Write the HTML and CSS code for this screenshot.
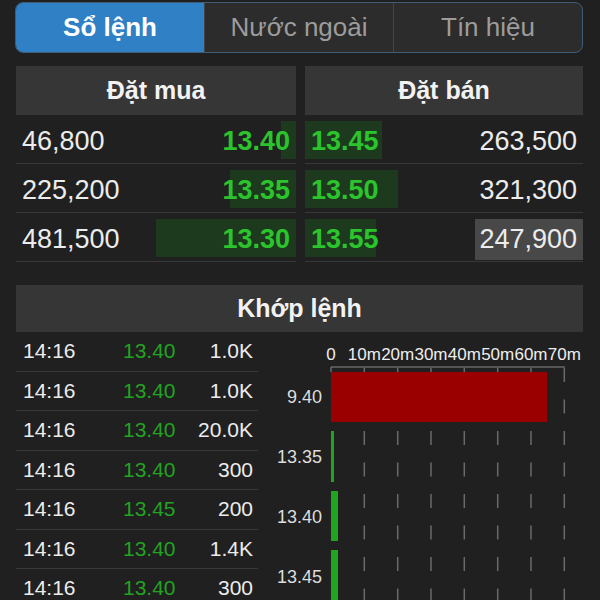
FILE: index.html
```html
<!DOCTYPE html>
<html lang="vi">
<head>
<meta charset="utf-8">
<title>Sổ lệnh</title>
<link rel="stylesheet" href="styles.css">
</head>
<body>
<div class="tabs">
  <div class="tab active">Sổ lệnh</div>
  <div class="tab">Nước ngoài</div>
  <div class="tab">Tín hiệu</div>
</div>

<div class="book">
  <div class="side buy">
    <div class="head">Đặt mua</div>
    <div class="row"><span class="bar" style="width:15px"></span><span class="qty">46,800</span><span class="price">13.40</span></div>
    <div class="row"><span class="bar" style="width:66px"></span><span class="qty">225,200</span><span class="price">13.35</span></div>
    <div class="row"><span class="bar" style="width:140px"></span><span class="qty">481,500</span><span class="price">13.30</span></div>
  </div>
  <div class="side sell">
    <div class="head">Đặt bán</div>
    <div class="row"><span class="bar" style="width:77px"></span><span class="price">13.45</span><span class="qty">263,500</span></div>
    <div class="row"><span class="bar" style="width:93px"></span><span class="price">13.50</span><span class="qty">321,300</span></div>
    <div class="row"><span class="bar" style="width:71px"></span><span class="price">13.55</span><span class="qty hl">247,900</span></div>
  </div>
</div>

<div class="match-head">Khớp lệnh</div>

<div class="match">
  <div class="trades">
    <div class="trade"><span class="t">14:16</span><span class="p">13.40</span><span class="v">1.0K</span></div>
    <div class="trade"><span class="t">14:16</span><span class="p">13.40</span><span class="v">1.0K</span></div>
    <div class="trade"><span class="t">14:16</span><span class="p">13.40</span><span class="v">20.0K</span></div>
    <div class="trade"><span class="t">14:16</span><span class="p">13.40</span><span class="v">300</span></div>
    <div class="trade"><span class="t">14:16</span><span class="p">13.45</span><span class="v">200</span></div>
    <div class="trade"><span class="t">14:16</span><span class="p">13.40</span><span class="v">1.4K</span></div>
    <div class="trade"><span class="t">14:16</span><span class="p">13.40</span><span class="v">300</span></div>
  </div>
  <svg class="chart" width="325" height="268" viewBox="0 0 325 268">
    <g class="ax" text-anchor="middle">
      <text x="73" y="28">0</text>
      <text x="106.3" y="28">10m</text>
      <text x="139.7" y="28">20m</text>
      <text x="173" y="28">30m</text>
      <text x="206.3" y="28">40m</text>
      <text x="239.7" y="28">50m</text>
      <text x="273" y="28">60m</text>
      <text x="306.3" y="28">70m</text>
    </g>
    <line x1="73" y1="35" x2="307" y2="35" stroke="#8a8a8a" stroke-width="1"/>
    <line x1="73" y1="35" x2="73" y2="40" stroke="#8a8a8a" stroke-width="1"/>
    <g stroke="#6a6a6a" stroke-width="1.5" stroke-dasharray="14 17.5">
      <line x1="106.3" y1="36" x2="106.3" y2="268"/>
      <line x1="139.7" y1="36" x2="139.7" y2="268"/>
      <line x1="173" y1="36" x2="173" y2="268"/>
      <line x1="206.3" y1="36" x2="206.3" y2="268"/>
      <line x1="239.7" y1="36" x2="239.7" y2="268"/>
      <line x1="273" y1="36" x2="273" y2="268"/>
      <line x1="306.3" y1="36" x2="306.3" y2="268"/>
    </g>
    <rect x="73" y="40" width="216" height="50" fill="#9b0000"/>
    <rect x="73" y="99" width="3" height="51" fill="#1fa51f"/>
    <rect x="73" y="159" width="7" height="50" fill="#1fa51f"/>
    <rect x="73" y="218" width="7" height="50" fill="#1fa51f"/>
    <g class="yl" text-anchor="end">
      <text x="64" y="71">9.40</text>
      <text x="64" y="131">13.35</text>
      <text x="64" y="191">13.40</text>
      <text x="64" y="251">13.45</text>
    </g>
  </svg>
</div>
</body>
</html>
```
FILE: styles.css
```css
html, body {
  margin: 0;
  padding: 0;
  height: 600px;
  overflow: hidden;
  background: #202020;
  color: #ececec;
  font-family: "Liberation Sans", Arial, sans-serif;
}

.tabs {
  display: flex;
  height: 49px;
  margin: 2px 17px 0 15px;
  border: 1.5px solid #3e5b78;
  border-radius: 8px;
  overflow: hidden;
  background: #2c2c2c;
}
.tab {
  flex: 1;
  display: flex;
  align-items: center;
  justify-content: center;
  font-size: 26px;
  color: #9c9c9c;
  border-left: 1px solid #454545;
}
.tab:first-child { border-left: none; }
.tab.active {
  background: #2f80c4;
  color: #fff;
  font-weight: bold;
}

.book {
  display: grid;
  grid-template-columns: 280px 278px;
  column-gap: 9px;
  margin: 13px 17px 0 16px;
}
.head, .match-head {
  height: 49px;
  display: flex;
  align-items: center;
  justify-content: center;
  background: #363636;
  font-size: 25px;
  font-weight: bold;
  color: #f2f2f2;
}
.row {
  position: relative;
  height: 44px;
  padding: 4px 6px 0;
  display: flex;
  align-items: center;
  justify-content: space-between;
  border-bottom: 1px solid #383838;
  font-size: 27px;
}
.row .bar {
  position: absolute;
  top: 6px;
  bottom: 4px;
  background: #1d3a1f;
}
.buy .bar { right: 0; }
.sell .bar { left: 0; }
.qty, .price { position: relative; }
.price {
  color: #2cc42c;
  font-weight: bold;
}
.qty.hl {
  background: #484848;
  height: 41px;
  line-height: 41px;
  padding: 0 6px 0 4px;
  margin-right: -6px;
}

.match-head {
  margin: 23px 17px 0 16px;
  height: 47px;
}

.match {
  display: grid;
  grid-template-columns: 242px 325px;
  margin: 0 17px 0 16px;
}
.trade {
  height: 38.5px;
  display: flex;
  align-items: center;
  border-bottom: 1px solid #383838;
  font-size: 21px;
}
.trade .t { width: 100px; padding-left: 7px; }
.trade .p { width: 70px; color: #22a322; }
.trade .v { flex: 1; text-align: right; padding-right: 5px; }

.chart { display: block; }
.chart text { font-family: "Liberation Sans", Arial, sans-serif; }
.chart .ax text { font-size: 17px; fill: #eeeeee; }
.chart .yl text { font-size: 18px; fill: #dddddd; }
```
